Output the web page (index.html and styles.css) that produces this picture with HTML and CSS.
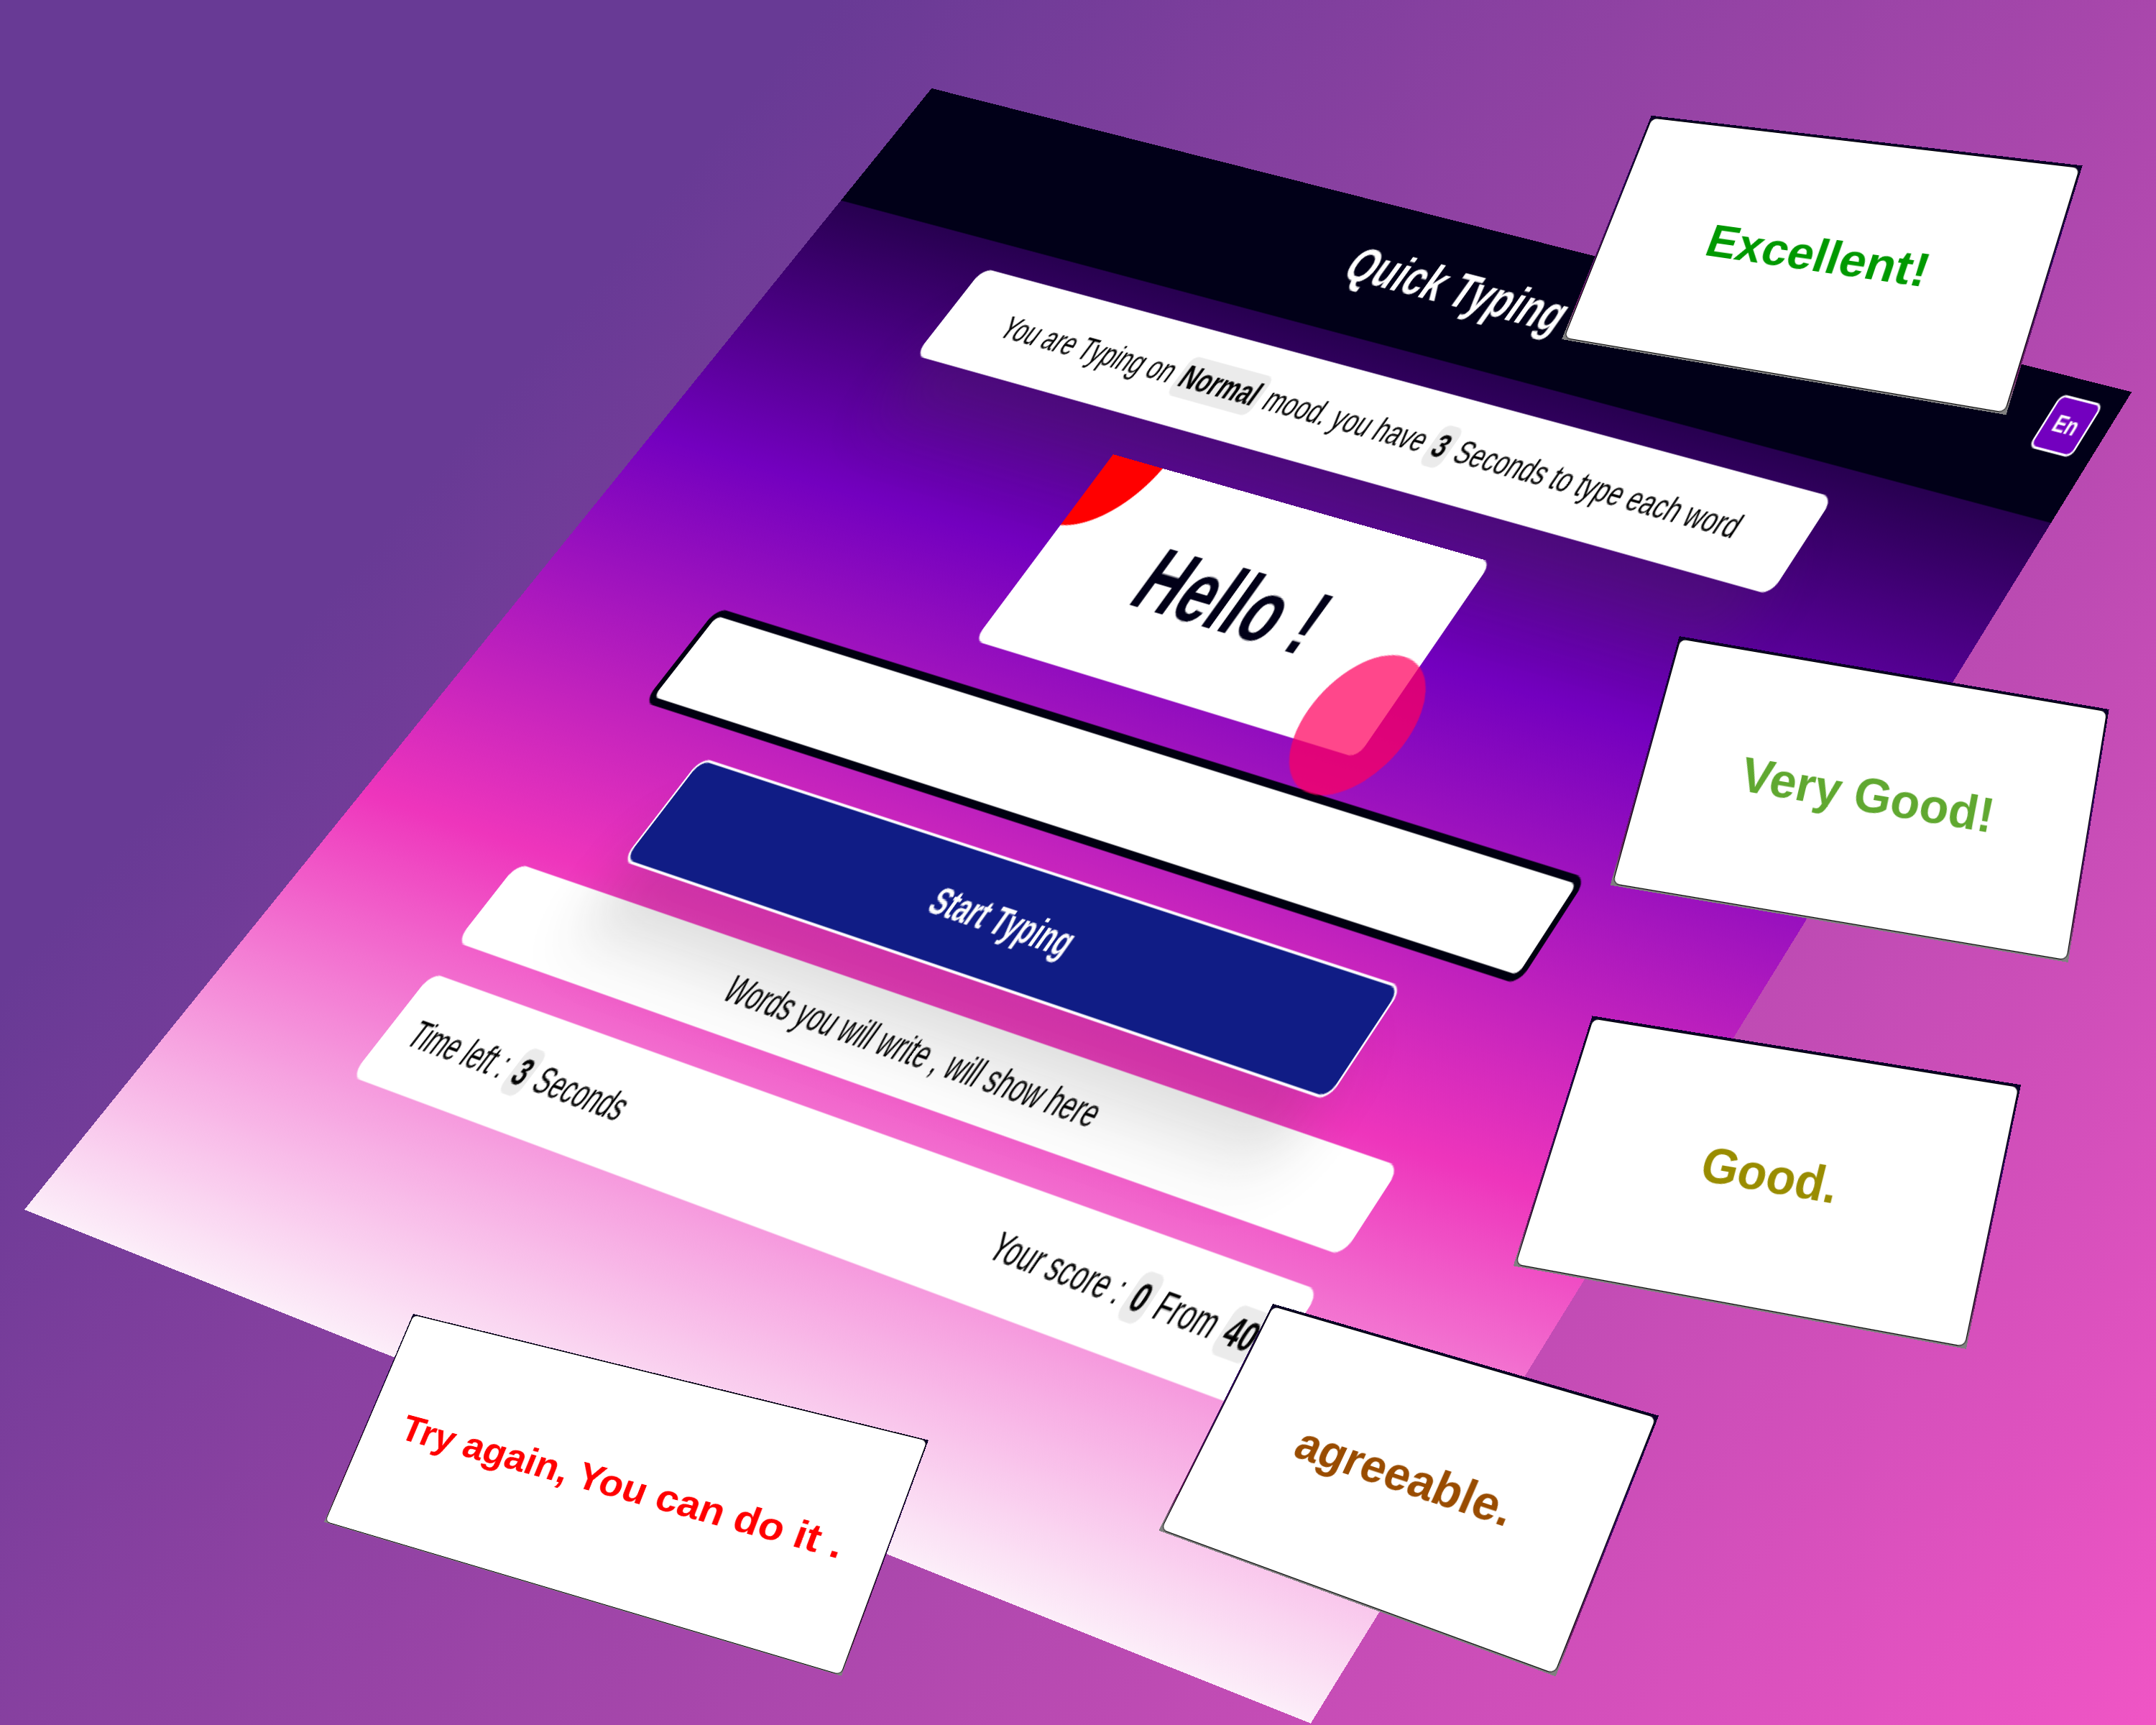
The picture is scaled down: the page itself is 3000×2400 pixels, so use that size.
FILE: index.html
```html
<!DOCTYPE html>
<html lang="en">
<head>
<meta charset="utf-8">
<meta name="viewport" content="width=device-width, initial-scale=1">
<title>Quick Typing</title>
<link rel="stylesheet" href="styles.css">
<script src="scene.js" defer></script>
</head>
<body>
<main class="scene">
  <section class="sheet page" data-corners="43.21 5.12, 98.89 22.73, 60.81 99.93, 1.13 70.13">
    <header class="page-header">
      <h1 class="page-title">Quick Typing</h1>
      <button class="language" type="button">En</button>
    </header>
    <div class="page-body">
      <p class="bar bar-mood">You are Typing on <b class="pill">Normal</b> mood. you have <b class="pill">3</b> Seconds to type each word</p>
      <div class="word-card"><span class="word">Hello !</span></div>
      <input class="word-input" type="text" aria-label="Type the word">
      <button class="start" type="button">Start Typing</button>
      <p class="bar bar-words">Words you will write , will show here</p>
      <div class="bar bar-score">
        <span>Time left : <b class="pill">3</b> Seconds</span>
        <span>Your score : <b class="pill">0</b> From <b class="pill">40</b></span>
      </div>
    </div>
  </section>

  <article class="sheet result" data-corners="76.59 6.70, 96.59 9.60, 93.05 24.05, 72.44 19.67">
    <p class="result-text excellent">Excellent!</p>
  </article>
  <article class="sheet result" data-corners="77.89 36.88, 97.82 41.12, 95.92 55.79, 74.69 51.32">
    <p class="result-text very-good">Very Good!</p>
  </article>
  <article class="sheet result" data-corners="73.85 58.89, 93.74 62.89, 91.20 78.21, 70.19 73.39">
    <p class="result-text good">Good.</p>
  </article>
  <article class="sheet result result-narrow" data-corners="59.03 75.58, 76.94 82.07, 72.16 97.19, 53.75 88.73">
    <p class="result-text agreeable">agreeable.</p>
  </article>
  <article class="sheet result result-wide" data-corners="19.16 76.17, 43.07 83.49, 39.03 97.17, 15.03 88.24">
    <p class="result-text try-again">Try again, You can do it .</p>
  </article>
</main>
</body>
</html>
```
FILE: styles.css
```css
* {
  box-sizing: border-box;
}

body {
  margin: 0;
  font-family: "Liberation Sans", Arial, sans-serif;
  background: #683a95;
}

h1,
p {
  margin: 0;
}

button,
input {
  font: inherit;
}

/* The stage: every sheet is pinned to four points of it by scene.js */
.scene {
  position: relative;
  width: 100%;
  aspect-ratio: 5 / 4;
  overflow: hidden;
  background: linear-gradient(130deg, #683a95 23%, #f055c5 100%);
}

.sheet {
  position: absolute;
  top: 0;
  left: 0;
  transform-origin: 0 0;
}

/* Game page */
.page {
  width: 1520px;
  font-size: 28px;
  color: #000;
  background: linear-gradient(#010018, #7300bf 34%, #ee35bc 66%, #fceef9);
}

.page-header {
  display: grid;
  grid-template-columns: 1fr auto 1fr;
  align-items: start;
  height: 114px;
  padding: 15px 20px 22px;
  color: #fff;
  background: #010018;
}

.page-title {
  grid-column: 2;
  align-self: center;
  font-size: 43px;
  line-height: 48px;
}

.language {
  justify-self: end;
  width: 48px;
  height: 47px;
  padding: 0;
  border: 2px solid #fff;
  border-radius: 7px;
  font-size: 20px;
  font-weight: bold;
  color: #fff;
  background: #7300bf;
}

.page-body {
  display: flex;
  flex-direction: column;
  align-items: center;
  gap: 25px;
  padding: 24px 4px 155px 0;
}

.bar {
  display: flex;
  align-items: center;
  justify-content: center;
  width: 1068px;
  border-radius: 12px;
  background: #fff;
  white-space: pre;
}

.bar-mood {
  height: 84px;
  box-shadow: 0 54px 60px -10px rgba(80, 60, 80, 0.24);
}

.pill {
  padding: 2px 4px;
  border-radius: 8px;
  background: #ebebeb;
}

.word-card {
  position: relative;
  display: flex;
  align-items: center;
  justify-content: center;
  width: 472px;
  height: 166px;
  margin: 8px 0;
  border-radius: 0 10px 10px 10px;
  background: radial-gradient(circle at -10px -10px, #f00 74px, #fff 75px);
}

.word-card::after {
  content: "";
  position: absolute;
  right: -37px;
  bottom: -34px;
  width: 118px;
  height: 114px;
  border-radius: 50%;
  background: rgba(255, 0, 94, 0.72);
}

.word {
  font-size: 70px;
  font-weight: bold;
  color: #010018;
}

.word-input {
  width: 1068px;
  height: 83px;
  padding: 0 20px;
  border: 6px solid #000010;
  border-radius: 12px;
  background: #fff;
}

.start {
  position: relative;
  width: 856px;
  height: 87px;
  border: 2px solid #fff;
  border-radius: 12px;
  font-size: 29px;
  font-weight: bold;
  color: #fff;
  background: #101c85;
  box-shadow: 0 54px 60px -10px rgba(48, 48, 48, 0.2);
}

.bar-words {
  height: 65px;
}

.bar-score {
  justify-content: space-between;
  height: 83px;
  padding: 0 25px 0 28px;
}

/* Result cards */
.result {
  display: flex;
  width: 610px;
  height: 340px;
  padding: 3px 2px 2px;
  background: linear-gradient(#0a0028, #2d0060 35%, #6b2065 85%, #808080 97%);
}

.result-narrow {
  width: 587px;
  height: 356px;
}

.result-wide {
  width: 890px;
  height: 400px;
  padding: 1px;
}

.result-text {
  display: flex;
  flex: 1;
  align-items: center;
  justify-content: center;
  border: 1px solid #000;
  border-radius: 9px;
  font-size: 65px;
  font-weight: bold;
  white-space: nowrap;
  background: #fff;
}

.excellent {
  color: #009900;
}

.very-good {
  color: #60a830;
}

.good {
  color: #998c00;
}

.agreeable {
  color: #994c00;
}

.try-again {
  color: #ff0000;
}
```
FILE: scene.js
```js
// Pins each sheet to its four corners (top left, top right, bottom right,
// bottom left), given in percent of the scene's width and height.
const scene = document.querySelector(".scene");

function projection(w, h, [p0, p1, p2, p3]) {
  const dx1 = p1.x - p2.x, dx2 = p3.x - p2.x, dx3 = p0.x - p1.x + p2.x - p3.x;
  const dy1 = p1.y - p2.y, dy2 = p3.y - p2.y, dy3 = p0.y - p1.y + p2.y - p3.y;
  const det = dx1 * dy2 - dx2 * dy1;
  const g = (dx3 * dy2 - dx2 * dy3) / det;
  const k = (dx1 * dy3 - dx3 * dy1) / det;
  return [
    (p1.x - p0.x + g * p1.x) / w, (p1.y - p0.y + g * p1.y) / w, 0, g / w,
    (p3.x - p0.x + k * p3.x) / h, (p3.y - p0.y + k * p3.y) / h, 0, k / h,
    0, 0, 1, 0,
    p0.x, p0.y, 0, 1
  ];
}

function place() {
  const { width, height } = scene.getBoundingClientRect();
  for (const sheet of document.querySelectorAll(".sheet")) {
    const corners = sheet.dataset.corners.split(",").map((pair) => {
      const [x, y] = pair.trim().split(" ").map(Number);
      return { x: (x * width) / 100, y: (y * height) / 100 };
    });
    const m = projection(sheet.offsetWidth, sheet.offsetHeight, corners);
    sheet.style.transform = `matrix3d(${m.map((n) => n.toFixed(9)).join(",")})`;
  }
}

window.addEventListener("resize", place);
place();
```
